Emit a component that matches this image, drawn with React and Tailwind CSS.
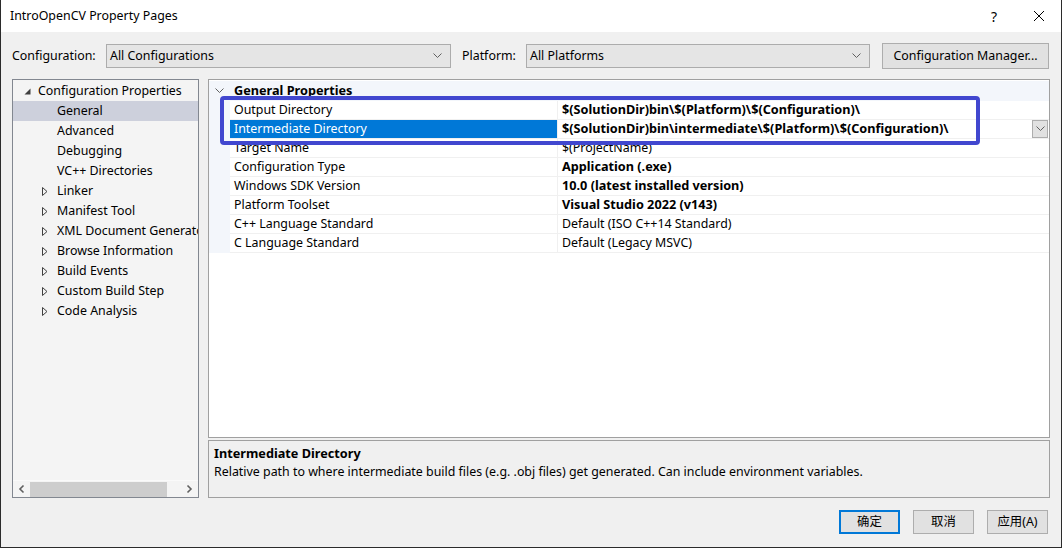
const FONT = { fontFamily: '"Noto Sans", "Noto Sans CJK SC", sans-serif' };

const TREE = [
  { label: "Configuration Properties", level: 0, icon: "open" },
  { label: "General", level: 1, selected: true },
  { label: "Advanced", level: 1 },
  { label: "Debugging", level: 1 },
  { label: "VC++ Directories", level: 1 },
  { label: "Linker", level: 1, icon: "closed" },
  { label: "Manifest Tool", level: 1, icon: "closed" },
  { label: "XML Document Generator", level: 1, icon: "closed" },
  { label: "Browse Information", level: 1, icon: "closed" },
  { label: "Build Events", level: 1, icon: "closed" },
  { label: "Custom Build Step", level: 1, icon: "closed" },
  { label: "Code Analysis", level: 1, icon: "closed" },
];

const PROPS = [
  { name: "Output Directory", value: "$(SolutionDir)bin\\$(Platform)\\$(Configuration)\\", bold: true },
  { name: "Intermediate Directory", value: "$(SolutionDir)bin\\intermediate\\$(Platform)\\$(Configuration)\\", bold: true, selected: true },
  { name: "Target Name", value: "$(ProjectName)" },
  { name: "Configuration Type", value: "Application (.exe)", bold: true },
  { name: "Windows SDK Version", value: "10.0 (latest installed version)", bold: true },
  { name: "Platform Toolset", value: "Visual Studio 2022 (v143)", bold: true },
  { name: "C++ Language Standard", value: "Default (ISO C++14 Standard)" },
  { name: "C Language Standard", value: "Default (Legacy MSVC)" },
];

function Chevron() {
  return (
    <svg width="9" height="6" viewBox="0 0 9 6">
      <path d="M0.5 0.5 L4.5 4.5 L8.5 0.5" fill="none" stroke="#606060" strokeWidth="1" />
    </svg>
  );
}

function Combo({ text, width }) {
  return (
    <div
      className="flex h-[24px] items-center justify-between border border-[#acacac] bg-[#e5e5e5] pl-[3px] pr-[8px]"
      style={{ width }}
    >
      <span>{text}</span>
      <Chevron />
    </div>
  );
}

function TreeIcon({ kind }) {
  if (kind === "open") {
    return (
      <svg width="7" height="7" viewBox="0 0 7 7">
        <path d="M6.5 0.5 L6.5 6.5 L0.5 6.5 Z" fill="#404040" />
      </svg>
    );
  }
  return (
    <svg width="6" height="9" viewBox="0 0 6 9">
      <path d="M0.5 0.5 L5 4.5 L0.5 8.5 Z" fill="none" stroke="#404040" strokeWidth="1" />
    </svg>
  );
}

function Button({ children, primary }) {
  return (
    <div
      className={`flex h-[24px] w-[61px] items-center justify-center bg-[#e1e1e1] ${
        primary ? "border-2 border-[#0078d7]" : "border border-[#adadad]"
      }`}
    >
      {children}
    </div>
  );
}

export default function App() {
  return (
    <div
      className="relative flex h-[548px] w-[1062px] flex-col overflow-hidden border-x border-b border-[#2b2b2b] bg-[#f0f0f0] text-[12.4px] text-black"
      style={FONT}
    >
      {/* title bar */}
      <div className="flex h-[32px] shrink-0 items-center justify-between bg-white pl-[9px] pr-[16px]">
        <span>IntroOpenCV Property Pages</span>
        <div className="flex items-center gap-[36px]">
          <span className="text-[14px]">?</span>
          <svg width="12" height="12" viewBox="0 0 12 12">
            <path d="M1 1 L11 11 M11 1 L1 11" stroke="#000" strokeWidth="1" />
          </svg>
        </div>
      </div>

      {/* configuration row */}
      <div className="mt-[11px] flex h-[26px] items-center pl-[11px]">
        <span className="w-[94px]">Configuration:</span>
        <Combo text="All Configurations" width={345} />
        <span className="ml-[11px] w-[64px]">Platform:</span>
        <Combo text="All Platforms" width={344} />
        <div className="ml-[12px] flex h-[26px] w-[167px] items-center justify-center border border-[#adadad] bg-[#e1e1e1]">
          Configuration Manager...
        </div>
      </div>

      {/* main area */}
      <div className="mt-[10px] flex h-[419px] gap-[9px] pl-[11px] pr-[11px]">
        {/* tree */}
        <div className="flex w-[187px] shrink-0 flex-col border border-[#828790] bg-[#f4f4f4] pt-[1px]">
          {TREE.map((item) => (
            <div
              key={item.label}
              className={`flex h-[20px] items-center overflow-hidden whitespace-nowrap ${
                item.selected ? "bg-[#cdd0dc]" : ""
              }`}
            >
              <span
                className={`flex w-[8px] shrink-0 items-center justify-center ${
                  item.level === 0 ? "ml-[10px] mr-[7px]" : "ml-[28px] mr-[8px]"
                }`}
              >
                {item.icon ? <TreeIcon kind={item.icon} /> : null}
              </span>
              <span>{item.label}</span>
            </div>
          ))}
          <div className="flex-1" />
          <div className="flex h-[17px] items-center border-t border-[#fafafa] px-[1px]">
            <svg width="16" height="16" viewBox="0 0 16 16" className="shrink-0">
              <path d="M9.5 4.5 L6 8 L9.5 11.5" fill="none" stroke="#606060" strokeWidth="1.6" />
            </svg>
            <div className="h-[15px] w-[137px] bg-[#cdcdcd]" />
            <div className="flex-1" />
            <svg width="16" height="16" viewBox="0 0 16 16" className="shrink-0">
              <path d="M6.5 4.5 L10 8 L6.5 11.5" fill="none" stroke="#606060" strokeWidth="1.6" />
            </svg>
          </div>
        </div>

        {/* right column */}
        <div className="flex flex-1 flex-col gap-[2px]">
          <div className="flex h-[359px] flex-col border border-[#a0a0a0] bg-white pt-[1px]">
            <div className="flex h-[20px] items-center bg-[#f3f6fb]">
              <span className="flex w-[21px] justify-center">
                <Chevron />
              </span>
              <span className="ml-[4px] text-[12.7px] font-bold">General Properties</span>
            </div>
            {PROPS.map((p) => (
              <div key={p.name} className="flex h-[19px] bg-[#f3f6fb]">
                <div className="w-[21px] shrink-0" />
                <div
                  className={`flex w-[328px] shrink-0 items-center border-b border-r border-[#f0f0f0] pl-[4px] ${
                    p.selected ? "bg-[#0078d7] text-white" : "bg-white"
                  }`}
                >
                  {p.name}
                </div>
                <div className="flex flex-1 items-center justify-between border-b border-[#f0f0f0] bg-white pl-[4px]">
                  <span className={p.bold ? "text-[12.7px] font-bold" : ""}>{p.value}</span>
                  {p.selected && (
                    <div className="mr-[1px] flex h-[18px] w-[16px] items-center justify-center border border-[#adadad] bg-[#e1e1e1]">
                      <Chevron />
                    </div>
                  )}
                </div>
              </div>
            ))}
          </div>
          <div className="flex h-[58px] flex-col border border-[#a0a0a0] bg-[#f0f0f0] px-[5px] pt-[3px]">
            <span className="text-[12.7px] font-bold leading-[19px]">Intermediate Directory</span>
            <span className="leading-[18px]">
              Relative path to where intermediate build files (e.g. .obj files) get generated. Can include environment variables.
            </span>
          </div>
        </div>
      </div>

      {/* buttons */}
      <div className="mt-[12px] flex justify-end gap-[13px] pr-[13px]">
        <Button primary>确定</Button>
        <Button>取消</Button>
        <Button>应用(A)</Button>
      </div>

      {/* annotation */}
      <div className="absolute left-[219px] top-[96px] h-[49px] w-[760px] rounded-[4px] border-[4px] border-[#4147cf]" />
    </div>
  );
}
